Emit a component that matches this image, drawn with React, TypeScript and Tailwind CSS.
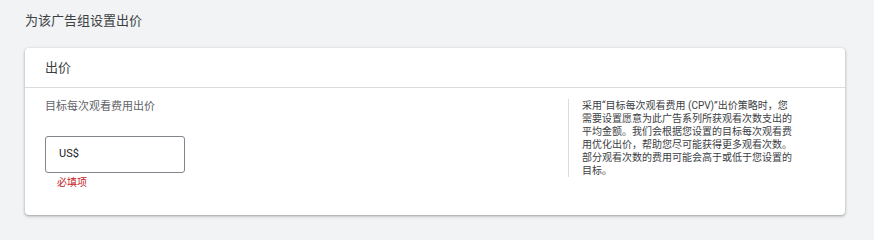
const font = "font-['Roboto','Noto_Sans_CJK_SC',sans-serif]";

const App = () => {
  return (
    <div className={`min-h-[240px] w-full bg-[#f1f3f4] px-[25px] pt-[11px] ${font}`}>
      <h1 className="text-[13px] leading-[20px] text-[#3c4043]">为该广告组设置出价</h1>

      <div className="mt-[17px] w-[820px] rounded-[4px] bg-white shadow-[0_1px_2px_0_rgba(60,64,67,0.3),0_1px_3px_1px_rgba(60,64,67,0.15)]">
        {/* Card header */}
        <div className="flex h-[40px] items-center border-b border-[#dadce0] px-[20px]">
          <span className="text-[13px] text-[#3c4043]">出价</span>
        </div>

        {/* Card body */}
        <div className="flex pb-[25px]">
          <div className="w-[543px] pl-[20px] pt-[11px]">
            <div className="text-[11px] leading-[16px] text-[#5f6368]">目标每次观看费用出价</div>
            <div className="mt-[21px] flex h-[37px] w-[140px] items-center rounded-[3px] border border-[#80868b] px-[13px]">
              <span className="text-[11px] text-[#202124]">US$</span>
            </div>
            <div className="mt-[3px] pl-[12px] text-[10px] leading-[14px] text-[#c5221f]">必填项</div>
          </div>

          <div className="flex-1 pt-[11px]">
            <p className="border-l border-[#dadce0] pl-[13px] text-[10px] leading-[13px] text-[#3c4043]">
              采用“目标每次观看费用 (CPV)”出价策略时，您<br />
              需要设置愿意为此广告系列所获观看次数支出的<br />
              平均金额。我们会根据您设置的目标每次观看费<br />
              用优化出价，帮助您尽可能获得更多观看次数。<br />
              部分观看次数的费用可能会高于或低于您设置的<br />
              目标。
            </p>
          </div>
        </div>
      </div>
    </div>
  );
};

export default App;
